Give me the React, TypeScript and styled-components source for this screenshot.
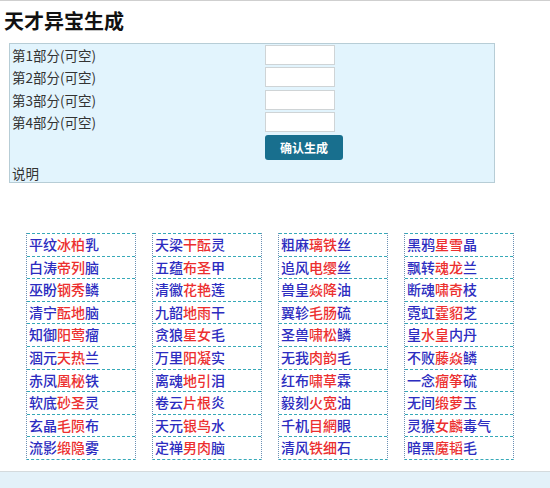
import styled, { createGlobalStyle } from 'styled-components';

const GlobalStyle = createGlobalStyle`
    html, body {
        margin: 0;
        padding: 0;
        background: #fff;
    }
    body {
        font-family: "Liberation Sans", "Noto Sans CJK SC", sans-serif;
        color: #222;
    }
`;

type Name = { pre: string; mid: string; post: string };

const parts: string[] = [
    '平纹|冰柏|乳', '白涛|帝列|脑', '巫盼|钢秀|鳞', '清宁|酝地|脑', '知御|阳莺|瘤',
    '涸元|天热|兰', '赤凤|凰秘|铁', '软底|砂圣|灵', '玄晶|毛陨|布', '流影|缎隐|雾',
    '天梁|干酝|灵', '五蕴|布圣|甲', '清徽|花艳|莲', '九韶|地雨|干', '贪狼|星女|毛',
    '万里|阳凝|实', '离魂|地引|泪', '卷云|片根|炎', '天元|银鸟|水', '定禅|男肉|脑',
    '粗麻|璃铁|丝', '追风|电缨|丝', '兽皇|焱降|油', '翼轸|毛肠|硫', '圣兽|啸松|鳞',
    '无我|肉韵|毛', '红布|啸草|霖', '毅刻|火宽|油', '千机|目網|眼', '清风|铁细|石',
    '黑鸦|星雪|晶', '飘转|魂龙|兰', '断魂|啸奇|枝', '霓虹|霆貂|芝', '皇|水皇|内丹',
    '不败|藤焱|鳞', '一念|瘤筝|硫', '无间|缎萝|玉', '灵猴|女麟|毒气', '暗黑|魔韬|毛',
];

const names: Name[] = parts.map((p) => {
    const [pre, mid, post] = p.split('|');
    return { pre, mid, post };
});

const columns: Name[][] = [0, 1, 2, 3].map((c) => names.slice(c * 10, c * 10 + 10));

export default function App() {
    return (
        <Page>
            <GlobalStyle />
            <Title>天才异宝生成</Title>
            <FormBox>
                <FormRow>
                    <Label>第1部分(可空)</Label>
                    <Input />
                </FormRow>
                <FormRow>
                    <Label>第2部分(可空)</Label>
                    <Input />
                </FormRow>
                <FormRow>
                    <Label>第3部分(可空)</Label>
                    <Input />
                </FormRow>
                <FormRow>
                    <Label>第4部分(可空)</Label>
                    <Input />
                </FormRow>
                <FormRow>
                    <Label />
                    <SubmitButton>确认生成</SubmitButton>
                </FormRow>
                <Note>说明</Note>
            </FormBox>
            <Results>
                {columns.map((col, i) => (
                    <Column key={i}>
                        {col.map((n) => (
                            <Item key={n.pre + n.mid + n.post}>
                                <Blue>{n.pre}</Blue>
                                <Red>{n.mid}</Red>
                                <Blue>{n.post}</Blue>
                            </Item>
                        ))}
                    </Column>
                ))}
            </Results>
            <Footer />
        </Page>
    );
}

const Page = styled.div`
    border-top: 1px solid #cfcfcf;
    min-height: 487px;
    display: flex;
    flex-direction: column;
`;

const Title = styled.h1`
    margin: 8px 0 0 4px;
    font-size: 20px;
    line-height: 24px;
    font-weight: bold;
    color: #111;
    font-family: "Noto Sans CJK SC", sans-serif;
`;

const FormBox = styled.div`
    margin: 10px 0 0 9px;
    width: 486px;
    height: 140px;
    box-sizing: border-box;
    background: #e2f4fd;
    border: 1px solid #b7cdd6;
    padding: 1px 0 0 2px;
    display: flex;
    flex-direction: column;
    gap: 2.4px;
`;

const FormRow = styled.div`
    display: flex;
    align-items: flex-start;
`;

const Label = styled.div`
    width: 253px;
    font-size: 13.5px;
    line-height: 20px;
    color: #333;
    font-family: "Noto Sans CJK SC", sans-serif;
`;

const Input = styled.input`
    width: 70px;
    height: 20px;
    box-sizing: border-box;
    border: 1px solid #cfd4d6;
    background: #fff;
    margin: 0;
    padding: 0;
`;

const SubmitButton = styled.button`
    width: 78px;
    height: 25px;
    background: #186f8e;
    color: #fff;
    border: 0;
    border-radius: 3px;
    font-size: 12px;
    font-weight: bold;
    font-family: "Noto Sans CJK SC", sans-serif;
    padding: 0;
`;

const Note = styled.div`
    font-size: 13.5px;
    line-height: 18px;
    color: #333;
    font-family: "Noto Sans CJK SC", sans-serif;
    margin-top: 2px;
`;

const Results = styled.div`
    display: flex;
    gap: 16px;
    padding-left: 26px;
    margin-top: 50px;
`;

const Column = styled.div`
    width: 110px;
    box-sizing: border-box;
    border-left: 1px dotted #6b8fb3;
    border-right: 1px dotted #6b8fb3;
    border-bottom: 1px dashed #36a9b8;
    display: flex;
    flex-direction: column;
`;

const Item = styled.div`
    height: 22.6px;
    box-sizing: border-box;
    border-top: 1px dashed #36a9b8;
    padding-left: 2px;
    font-size: 14px;
    line-height: 21px;
    font-weight: 500;
    font-family: "Noto Sans CJK SC", sans-serif;
    white-space: nowrap;
`;

const Blue = styled.span`
    color: #2c2cc0;
`;

const Red = styled.span`
    color: #ec2f2f;
`;

const Footer = styled.div`
    margin-top: auto;
    height: 16px;
    border-top: 1px solid #d4dadd;
    background: #e3f1f9;
`;
